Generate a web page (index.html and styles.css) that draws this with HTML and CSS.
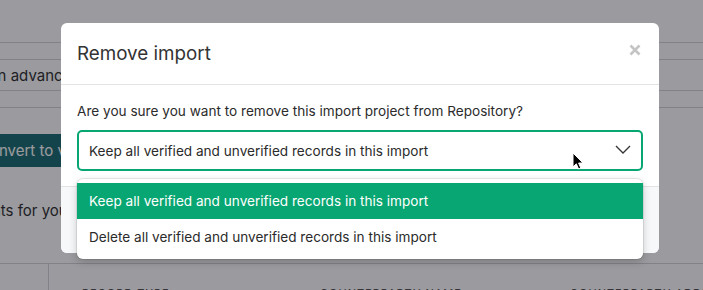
FILE: index.html
```html
<!DOCTYPE html>
<html lang="en">
<head>
    <meta charset="UTF-8">
    <meta name="viewport" content="width=device-width, initial-scale=1.0">
    <title>Remove import</title>
    <link rel="stylesheet" href="styles.css">
</head>
<body>
  <div class="page">
        <div class="rows">
            <div class="row row-top"></div>
            <div class="row row-thin"></div>
            <div class="row row-text"><span>Verified records from this import are stored to run in advance</span></div>
            <div class="row row-thin"></div>
        </div>
        <div class="convert-wrap">
            <button class="convert-btn">Convert to verified</button>
        </div>
        <div class="statement-row">
            <p class="statement">We found statements for you</p>
        </div>
        <div class="table-head">
            <div class="th th-check"></div>
            <div class="th th-type">Record type</div>
            <div class="th th-name">Counterparty name</div>
            <div class="th th-addr">Counterparty address</div>
        </div>
    </div>

    <div class="overlay"></div>

    <div class="modal">
        <div class="modal-header">
            <h2>Remove import</h2>
            <svg class="close" width="12" height="12" viewBox="0 0 12 12">
                <path d="M1.5 1.5 L10.5 10.5 M10.5 1.5 L1.5 10.5" stroke="#c4c4c4" stroke-width="2.6" stroke-linecap="butt"/>
            </svg>
        </div>
        <div class="modal-body">
            <p class="question">Are you sure you want to remove this import project from Repository?</p>
            <div class="select-wrap">
                <div class="select">
                    <span>Keep all verified and unverified records in this import</span>
                    <svg class="chevron" width="16" height="9" viewBox="0 0 16 9">
                        <polyline points="1,1 8,8 15,1" fill="none" stroke="#333" stroke-width="1.3"/>
                    </svg>
                </div>
                <ul class="options">
                    <li class="option selected">Keep all verified and unverified records in this import</li>
                    <li class="option">Delete all verified and unverified records in this import</li>
                </ul>
                <svg class="cursor" width="13" height="19" viewBox="0 0 13 19">
                    <path d="M1 1 L1 15 L4.3 11.8 L6.6 17 L8.8 16 L6.6 11 L11 11 Z" fill="#000" stroke="#fff" stroke-width="1"/>
                </svg>
            </div>
        </div>
        <div class="modal-footer"></div>
    </div>
</body>
</html>
```

FILE: styles.css
```css
body {
    margin: 0;
    font-family: 'Inter', 'Noto Sans', sans-serif;
    background-color: #fff;
    width: 703px;
    height: 290px;
    overflow: hidden;
    position: relative;
}

.page {
    margin-left: -31px;
    width: 734px;
    overflow: hidden;
}

.rows .row {
    border-bottom: 1px solid #d4d4d8;
}

.row-top {
    height: 42px;
}

.row-thin {
    height: 16px;
}

.row-text {
    height: 30px;
    display: flex;
    align-items: center;
    font-size: 15px;
    color: #333;
}

.row-text span {
    margin-left: -331px;
    white-space: nowrap;
    flex-shrink: 0;
}

.convert-wrap {
    padding-top: 26px;
    height: 33px;
}

.convert-btn {
    background-color: #1f6f73;
    color: #fff;
    border: none;
    font-family: inherit;
    font-size: 15px;
    height: 33px;
    padding: 0 12px 0 10px;
    border-radius: 0 4px 4px 0;
}

.statement-row {
    height: 96px;
    border-bottom: 1px solid #d4d4d8;
}

.statement {
    margin: 0;
    padding-top: 34px;
    font-size: 15px;
    color: #333;
    margin-left: -106px;
    white-space: nowrap;
}

.table-head {
    display: flex;
    height: 40px;
}

.th {
    font-size: 11px;
    letter-spacing: 1px;
    text-transform: uppercase;
    color: #555;
    padding-top: 22px;
    white-space: nowrap;
    flex-shrink: 0;
}

.th-check {
    width: 79px;
    border-right: 1px solid #d4d4d8;
}

.th-type {
    width: 238px;
    padding-left: 33px;
}

.th-name {
    width: 250px;
}

.overlay {
    position: absolute;
    inset: 0;
    background-color: rgba(4, 6, 16, 0.4);
}

.modal {
    position: absolute;
    left: 61px;
    top: 23px;
    width: 598px;
    background-color: #fff;
    border-radius: 6px;
}

.modal-header {
    height: 61px;
    border-bottom: 1px solid #e3e3e3;
    display: flex;
    align-items: center;
    justify-content: space-between;
    padding: 0 18px 0 16px;
}

.modal-header h2 {
    margin: 0;
    font-size: 18.8px;
    font-weight: 400;
    color: #333;
}

.close {
    margin-top: -8px;
}

.modal-body {
    padding: 16px 16px 15px;
}

.question {
    margin: 0 0 9px;
    font-size: 13.6px;
    line-height: 20px;
    color: #2b2b2b;
}

.select-wrap {
    position: relative;
}

.select {
    height: 37px;
    border: 2px solid #08a672;
    border-radius: 5px;
    display: flex;
    align-items: center;
    justify-content: space-between;
    padding: 0 10px;
    font-size: 13.6px;
    color: #2b2b2b;
}

.chevron {
    margin-top: -2px;
}

.options {
    position: absolute;
    left: 0;
    right: 0;
    top: 49px;
    margin: 0;
    padding: 4px 0;
    list-style: none;
    background-color: #fff;
    border-radius: 6px;
    box-shadow: 0 0 0 1px rgba(0, 0, 0, 0.08), 0 3px 8px rgba(0, 0, 0, 0.2);
    z-index: 2;
}

.option {
    height: 36px;
    display: flex;
    align-items: center;
    padding: 0 12px;
    font-size: 13.6px;
    color: #2b2b2b;
}

.option.selected {
    background-color: #08a672;
    color: #fff;
}

.cursor {
    position: absolute;
    left: 495px;
    top: 22px;
    z-index: 3;
}

.modal-footer {
    height: 66px;
    border-top: 1px solid #e3e3e3;
    background-color: #f7f8fa;
    border-radius: 0 0 6px 6px;
}
```
